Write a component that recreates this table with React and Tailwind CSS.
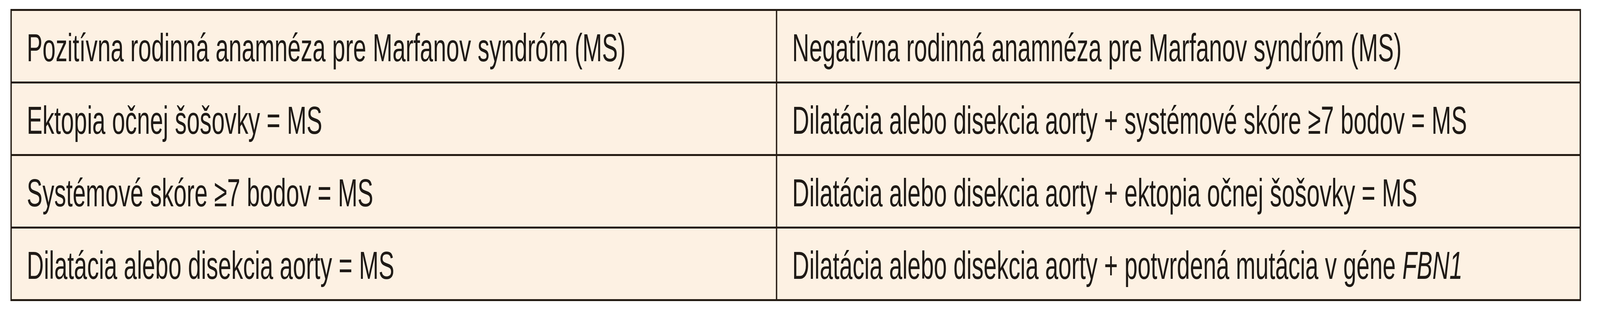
import { useEffect, useState } from 'react';

const rows = [
  ['Pozitívna rodinná anamnéza pre Marfanov syndróm (MS)', 'Negatívna rodinná anamnéza pre Marfanov syndróm (MS)'],
  ['Ektopia očnej šošovky = MS', 'Dilatácia alebo disekcia aorty + systémové skóre ≥7 bodov = MS'],
  ['Systémové skóre ≥7 bodov = MS', 'Dilatácia alebo disekcia aorty + ektopia očnej šošovky = MS'],
  [
    'Dilatácia alebo disekcia aorty = MS',
    <>Dilatácia alebo disekcia aorty + potvrdená mutácia v géne <i>FBN1</i></>,
  ],
];

const DESIGN_W = 5972;

// condensed face in the source, so the sans is narrowed a bit
const Cell = ({ children }) => (
  <div className="bg-[#fdf1e3] h-[181px] pl-[56px] pt-[7px] leading-[174px] text-[100px] text-[#1f1a16] whitespace-nowrap overflow-hidden">
    <span className="inline-block origin-left scale-x-[0.88]">{children}</span>
  </div>
);

export default function App() {
  // the window can be narrower than the 5972px design, so squeeze it horizontally to fit
  const [k, setK] = useState(() => Math.min(1, window.innerWidth / DESIGN_W));
  useEffect(() => {
    const onResize = () => setK(Math.min(1, window.innerWidth / DESIGN_W));
    window.addEventListener('resize', onResize);
    return () => window.removeEventListener('resize', onResize);
  }, []);

  return (
    <div className="w-full h-[800px] bg-white overflow-hidden font-['Liberation_Sans',Arial,sans-serif]">
      <div className="w-[5972px] h-[800px] pt-[23px] pl-[39px] origin-top-left" style={{ scale: `${k} 1` }}>
        <div className="w-[5862px] grid grid-cols-[2852px_2995px] gap-[5px] p-[5px] bg-[#241b13]">
          {rows.map((r, i) => (
            <div key={i} className="contents">
              <Cell>{r[0]}</Cell>
              <Cell>{r[1]}</Cell>
            </div>
          ))}
        </div>
      </div>
    </div>
  );
}
